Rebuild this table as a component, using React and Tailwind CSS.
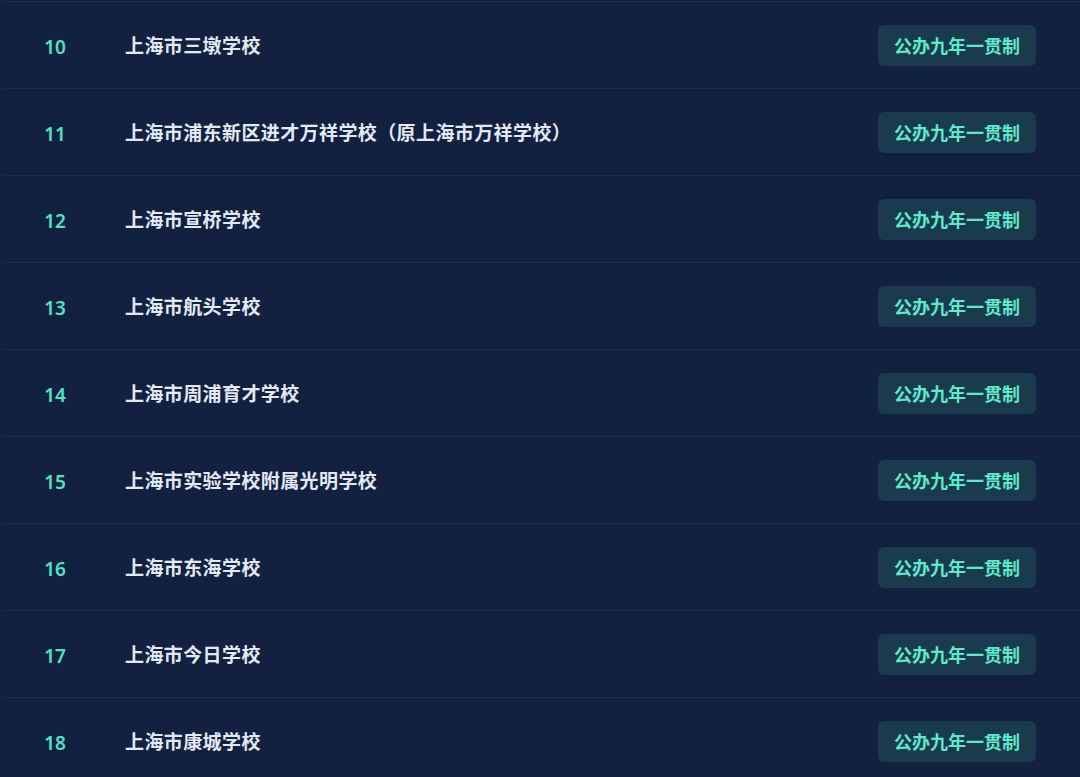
import React from "react";

const rows = [
  ["10", "上海市三墩学校"],
  ["11", "上海市浦东新区进才万祥学校（原上海市万祥学校）"],
  ["12", "上海市宣桥学校"],
  ["13", "上海市航头学校"],
  ["14", "上海市周浦育才学校"],
  ["15", "上海市实验学校附属光明学校"],
  ["16", "上海市东海学校"],
  ["17", "上海市今日学校"],
  ["18", "上海市康城学校"],
];

export default function App() {
  return (
    <div
      className="w-[1080px] h-[777px] overflow-hidden bg-[#12213f] pt-px"
      style={{ fontFamily: '"Noto Sans CJK SC", "Noto Sans", sans-serif' }}
    >
      {rows.map(([n, name]) => (
        <div key={n} className="flex flex-col">
          <div className="h-px ml-[3px] bg-[#1d2d4b]" />
          <div className="h-[86px] pt-px flex items-center">
            <div className="w-[110px] pt-[3px] text-center text-[19px] font-semibold font-['Noto_Sans',sans-serif] text-[#4fe3c1]">
              {n}
            </div>
            <div className="ml-[15px] flex-1 text-[19px] font-bold text-[#e3e9f3] tracking-[0.4px]">
              {name}
            </div>
            <div className="mr-[44px] h-[41px] px-4 flex items-center rounded-md bg-[#1a3a4e] text-[18px] font-bold text-[#5ee9c8]">
              公办九年一贯制
            </div>
          </div>
        </div>
      ))}
    </div>
  );
}
